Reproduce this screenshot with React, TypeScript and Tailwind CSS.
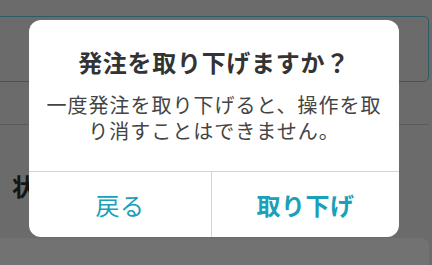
const JP = "font-['Noto_Sans_CJK_JP','Noto_Sans',sans-serif]";

function Backdrop() {
  return (
    <div className="flex h-full flex-col pt-[16px]">
      <div className="ml-[-8px] mr-[3px] h-[66px] rounded-[5px] border border-[#2c5c64]" />
      <div className="mt-[42px] mr-[3px] h-px bg-[#5a5a5a]" />
      <div className={`${JP} mt-[46px] pl-[12px] text-[24px] font-bold leading-[30px] text-[#141414]`}>状況</div>
      <div className="mt-auto mr-[3px] h-[27px] rounded-tr-[8px] bg-[#727272]" />
    </div>
  );
}

export default function App() {
  return (
    <div className={`${JP} relative h-[265px] w-[432px] overflow-hidden bg-[#6b6b6b]`}>
      <Backdrop />
      <div className="absolute left-[29px] top-[20px] flex h-[217px] w-[370px] flex-col overflow-hidden rounded-[12px] bg-white">
        <div className="flex h-[151px] flex-col items-center pt-[26px]">
          <h2 className="text-[24px] font-bold leading-[32px] tracking-[0.7px] text-[#333333]">
            発注を取り下げますか？
          </h2>
          <p className="mt-[14px] text-center text-[20px] leading-[26px] tracking-[1px] text-[#444444]">
            一度発注を取り下げると、操作を取
            <br />
            り消すことはできません。
          </p>
        </div>
        <div className="grid flex-1 grid-cols-[183px_1fr] border-t border-[#d4d4d4]">
          <button className="border-r border-[#d4d4d4] text-[24px] leading-none tracking-[0.5px] text-[#1aa0b8]">
            戻る
          </button>
          <button className="text-[24px] font-bold leading-none tracking-[0.5px] text-[#1aa0b8]">
            取り下げ
          </button>
        </div>
      </div>
    </div>
  );
}
